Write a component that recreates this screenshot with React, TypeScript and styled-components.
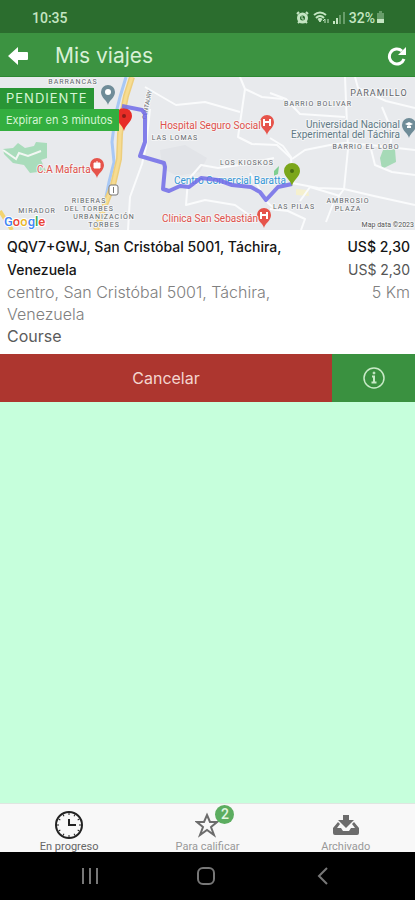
import React from "react";
import styled, { createGlobalStyle } from "styled-components";

const GlobalStyle = createGlobalStyle`
  * { box-sizing: border-box; }
  body { margin: 0; background: #c6ffdc; font-family: Inter, "Open Sans", sans-serif; }
  button { font: inherit; border: 0; padding: 0; cursor: pointer; background: none; }
  svg { display: block; }
`;

const Screen = styled.div`
  min-height: 100vh;
  display: flex;
  flex-direction: column;
  background: #c6ffdc;
`;

const StatusBar = styled.div`
  height: 33px;
  padding: 2px 30px 0 32px;
  display: flex;
  align-items: center;
  justify-content: space-between;
  background: #2b6d2e;
  color: #c4e5c2;
  font: 500 14px/20px Roboto, sans-serif;
`;

const StatusIcons = styled.div`
  display: flex;
  align-items: center;
  gap: 4px;
`;

const BatteryGroup = styled.div`
  display: flex;
  align-items: center;
  gap: 1px;
`;

const Header = styled.header`
  height: 44px;
  padding: 2px 8px 0;
  display: flex;
  align-items: center;
  background: #3c9341;
  border-bottom: 1px solid #2d8832;
  color: #fff;
`;

const Title = styled.h1`
  flex: 1;
  margin: 0 0 0 26px;
  font-size: 21px;
  line-height: 26px;
  font-weight: 400;
  color: #d9f0d7;
`;

const IconButton = styled.button`
  display: flex;
  color: inherit;
`;

const MapArea = styled.section`
  position: relative;
  height: 153px;
  overflow: hidden;
  background: #e8eaed;
`;

const MapDrawing = styled.svg`
  width: 100%;
  height: 100%;
`;

const MapText = styled.text<{ $size?: number; $spaced?: boolean }>`
  font-family: Roboto, sans-serif;
  font-size: ${(p) => p.$size ?? 8}px;
  font-weight: 400;
  letter-spacing: ${(p) => (p.$spaced ? "1px" : "normal")};
  paint-order: stroke;
  stroke: #f4f5f6;
  stroke-width: 2px;
  stroke-linejoin: round;
`;

const Badges = styled.div`
  position: absolute;
  top: 11px;
  left: 0;
  display: flex;
  flex-direction: column;
  align-items: flex-start;
`;

const Badge = styled.span<{ $strong?: boolean }>`
  padding: 0 6px;
  background: ${(p) => (p.$strong ? "#299535" : "#33ae3f")};
  color: #d6f5d4;
  font-size: ${(p) => (p.$strong ? 13 : 11)}px;
  line-height: ${(p) => (p.$strong ? 21 : 22)}px;
  letter-spacing: ${(p) => (p.$strong ? "1px" : "normal")};
`;

const Details = styled.section`
  padding: 5px 5px 6px 7px;
  display: flex;
  justify-content: space-between;
  gap: 24px;
  background: #fff;
`;

const Column = styled.div<{ $end?: boolean }>`
  flex: ${(p) => (p.$end ? "none" : "0 1 290px")};
  text-align: ${(p) => (p.$end ? "right" : "left")};
`;

const Line = styled.p<{ $tone: "strong" | "medium" | "light" | "plain" }>`
  margin: 0;
  font-size: ${(p) => (p.$tone === "light" || p.$tone === "plain" ? 16 : 14)}px;
  line-height: ${(p) => (p.$tone === "light" ? 22 : 23)}px;
  font-weight: ${(p) => (p.$tone === "strong" ? 500 : p.$tone === "light" ? 300 : 400)};
  color: ${(p) =>
    ({ strong: "#151515", medium: "#555", light: "#808080", plain: "#5b5b5b" })[p.$tone]};
`;

const Actions = styled.div`
  display: flex;
  height: 48px;
`;

const CancelButton = styled.button`
  flex: 4;
  background: #ad362f;
  color: #f4d5cf;
  font-size: 16px;
`;

const InfoButton = styled.button`
  flex: 1;
  display: flex;
  align-items: center;
  justify-content: center;
  background: #3a9140;
  color: #c8eac7;
`;

const Spacer = styled.main`
  flex: 1;
`;

const TabBar = styled.nav`
  height: 49px;
  display: grid;
  grid-template-columns: repeat(3, 1fr);
  background: #f8f8f8;
  border-top: 1px solid #dfe6e1;
  overflow: hidden;
`;

const Tab = styled.button<{ $active?: boolean }>`
  display: flex;
  flex-direction: column;
  align-items: center;
  padding-top: 5px;
  color: ${(p) => (p.$active ? "#222" : "#6c6c6c")};
`;

const TabIcon = styled.span`
  position: relative;
  height: 31px;
  display: flex;
  align-items: center;
`;

const TabLabel = styled.span<{ $active?: boolean }>`
  font: 400 11px/13px Roboto, sans-serif;
  color: ${(p) => (p.$active ? "#666" : "#999")};
`;

const Count = styled.span`
  position: absolute;
  top: -4px;
  left: 20px;
  width: 19px;
  height: 19px;
  border-radius: 50%;
  background: #5cad60;
  color: #e3f6e1;
  font: 500 14px/19px Roboto, sans-serif;
  text-align: center;
`;

const SystemBar = styled.nav`
  height: 48px;
  padding: 0 34px 0 32px;
  display: grid;
  grid-template-columns: repeat(3, 1fr);
  place-items: center;
  background: #000;
  color: #777;
`;

const roads = [
  "M150 32 L146 70 L142 87 L130 120 L128 153",
  "M240 0 L245 12 L262 20 L283 22",
  "M245 12 L238 60 L252 67 L277 68 L292 82",
  "M270 16 L286 22 L300 37 L345 40",
  "M292 82 L305 73 L330 68 L345 66 L370 68 L415 73",
  "M345 0 L348 72 L344 112 L333 127 L326 145",
  "M292 106 L318 111 L344 112",
  "M355 0 L358 11 L386 24 L415 31",
  "M270 61 L283 69 L291 80 L292 100",
  "M188 103 L201 88 L218 91 L240 88 L274 81",
  "M188 103 L186 128 L205 123 L235 128 L256 143",
  "M270 132 L288 134 L305 142 L301 153",
  "M250 96 L268 126 L276 133",
  "M344 112 L374 119 L415 128",
  "M370 68 L375 88 L392 95 L415 98",
  "M145 10 L176 28 L205 25 L240 35",
  "M382 30 L392 54 L390 72",
  "M300 124 L310 110 L340 119",
];

const areaLabels: [number, number, string][] = [
  [73, 7, "BARRANCAS"],
  [175, 63, "LAS LOMAS"],
  [247, 88, "LOS KIOSKOS"],
  [318, 29, "BARRIO BOLIVAR"],
  [366, 72, "BARRIO EL LOBO"],
  [89, 126, "RIBERAS"],
  [89, 134, "DEL TORBES"],
  [37, 136, "MIRADOR"],
  [104, 142, "URBANIZACIÓN"],
  [104, 150, "TORBES"],
  [294, 132, "LAS PILAS"],
  [348, 126, "AMBROSIO"],
  [348, 134, "PLAZA"],
];

function Pin({ x, y, color, mark, large }: { x: number; y: number; color: string; mark?: React.ReactNode; large?: boolean }) {
  return (
    <g transform={`translate(${x} ${y})`}>
      <path
        d={
          large
            ? "M0 10C-1 4-8 1-8-5A8 8 0 0 1 8-5C8 1 1 4 0 10Z"
            : "M0 11C-1 6-7 4-7-2A7 7 0 0 1 7-2C7 4 1 6 0 11Z"
        }
        fill={color}
      />
      {mark}
    </g>
  );
}

const hospitalMark = <path d="M-3-5V2M3-5V2M-3-2H3" stroke="#fff" strokeWidth="2" fill="none" />;

function TripMap() {
  return (
    <MapDrawing viewBox="0 0 415 153" preserveAspectRatio="xMidYMid slice" role="img" aria-label="Mapa del viaje">
      <rect width="415" height="153" fill="#e8eaed" />
      <path d="M160 73l25-5 22 13-7 14-23 4-15-8Z" fill="#e2e4e8" />
      <path d="M3 72l10-1 5-5 7 5 9-2 2-4 11 1v15l-6 2 5 11-16 2-6-8-11-2-9-9Z" fill="#a9dcbb" />
      <path d="M3 73l13 9 3-6 9 3 13-5" fill="none" stroke="#f2f7f3" strokeWidth="2" />
      <path d="M383 73l12-1 1 13-14 7-2-11Z" fill="#a6dab7" />
      <path d="M274 94l5-5-1 8-4 2Z" fill="#7fcf91" />
      <path d="M296 112l12 1 1 6-13-1Z" fill="#f5f0ce" />
      <g fill="none" stroke="#fafbfc" strokeWidth="2" strokeLinejoin="round">
        {roads.map((d) => (
          <path key={d} d={d} />
        ))}
      </g>
      <path d="M126 0l-6 20-5 20-3 25 2 20-5 20-4 20-8 28" fill="none" stroke="#a8c8f5" strokeWidth="3" />
      <path d="M132 0l-6 19-3 15-3 23-1 25-6 26-10 25-7 20" fill="none" stroke="#edce7d" strokeWidth="6" />
      <path d="M132 0l-6 19-3 15-3 23-1 25-6 26-10 25-7 20" fill="none" stroke="#f6dc92" strokeWidth="3" />
      <path d="M0 134l12 19" stroke="#f3d46f" strokeWidth="4" />
      <rect x="109" y="108" width="9" height="10" rx="2" fill="#fff" stroke="#777" />
      <path d="M113.500 110v6" stroke="#777" />
      <g fill="#62666b" textAnchor="middle">
        {areaLabels.map(([x, y, label]) => (
          <MapText key={label} x={x} y={y} $size={7} $spaced>
            {label}
          </MapText>
        ))}
        <MapText x="379" y="19" $size={9} $spaced>PARAMILLO</MapText>
        <MapText $size={6} transform="translate(149 28) rotate(-78)">CENTAURY</MapText>
      </g>
      <Pin x={108} y={17} color="#6f8c98" mark={<circle cy="-2" r="3" fill="#fff" />} />
      <Pin x={409} y={50} color="#6f8c98" mark={<path d="M-4-3 0-5 4-3 0-1ZM-2-1V1H2V-1" fill="#fff" />} />
      <Pin x={97} y={90} color="#e6544b" mark={<path d="M-3-4H3V1H-3ZM-1-5H1" fill="#fff" stroke="#fff" />} />
      <Pin x={267} y={47} color="#e6544b" mark={hospitalMark} />
      <Pin x={264} y={140} color="#e6544b" mark={hospitalMark} />
      <g fill="#df514b">
        <MapText x="37" y="96" $size={10}>C.A Mafarta</MapText>
        <MapText x="160" y="52" $size={10}>Hospital Seguro Social</MapText>
        <MapText x="162" y="145" $size={10}>Clínica San Sebastián</MapText>
      </g>
      <g fill="#607985" textAnchor="end">
        <MapText x="400" y="51" $size={10}>Universidad Nacional</MapText>
        <MapText x="400" y="61" $size={10}>Experimental del Táchira</MapText>
      </g>
      <g fill="#3497d6">
        <MapText x="174" y="107" $size={10}>Centro Comercial Baratta</MapText>
      </g>
      <Pin large x={124} y={44} color="#e72d26" mark={<circle cy="-5" r="2" fill="#8d1c18" />} />
      <path
        d="M122 29l20 4 3 4v28l-5 14 24 7 1 4-2 22 6 2 11-5 9 1 12-9 17 2 14 5 19 2 9 5 6 8 12-13 14-3"
        fill="none"
        stroke="#706be8"
        strokeOpacity="0.85"
        strokeWidth="4"
        strokeLinejoin="round"
      />
      <Pin large x={292} y={99} color="#7ba61a" mark={<circle cy="-5" r="2" fill="#486d10" />} />
      <g fontFamily="Roboto, sans-serif" fontSize="13" fontWeight="500" stroke="#fff" strokeWidth="2" paintOrder="stroke">
        <text x="4" y="149">
          <tspan fill="#4285f4">G</tspan>
          <tspan fill="#ea4335">o</tspan>
          <tspan fill="#e9b51f">o</tspan>
          <tspan fill="#4285f4">g</tspan>
          <tspan fill="#34a853">l</tspan>
          <tspan fill="#ea4335">e</tspan>
        </text>
      </g>
      <g fill="#555" textAnchor="end">
        <MapText x="414" y="150" $size={7}>Map data ©2023</MapText>
      </g>
    </MapDrawing>
  );
}

function ClockIcon() {
  return (
    <svg width="30" height="30" viewBox="0 0 30 30" fill="none" stroke="currentColor">
      <circle cx="15" cy="15" r="13" strokeWidth="2" />
      <path d="M15 9v6h7" strokeWidth="2" />
      {Array.from({ length: 12 }, (_, i) => (
        <path key={i} d="M15 3v2" transform={`rotate(${i * 30} 15 15)`} strokeWidth="1" />
      ))}
    </svg>
  );
}

export default function App() {
  return (
    <>
      <GlobalStyle />
      <Screen>
        <StatusBar>
          <span>10:35</span>
          <StatusIcons>
            <svg width="13" height="13" viewBox="0 0 13 13" fill="none" stroke="currentColor">
              <circle cx="6.500" cy="7" r="4" strokeWidth="3" />
              <path d="M1 3l2-2M12 3l-2-2M2 12l2-2M11 12l-2-2" strokeWidth="2" />
              <path d="M6 5v3h2" />
            </svg>
            <svg width="16" height="13" viewBox="0 0 16 13" fill="none" stroke="currentColor">
              <path d="M1 4Q7-1 13 4M3 7Q7 3 11 7" strokeWidth="2" />
              <path d="M5 8l2 3 2-3Q7 7 5 8Z" fill="currentColor" />
              <path d="M12 12V8m-2 2 2-2M15 8v4" />
            </svg>
            <svg width="12" height="12" viewBox="0 0 12 12" fill="currentColor">
              <path d="M0 9h2v3H0ZM3 6h2v6H3Z" />
              <path d="M6 3h2v9H6ZM10 0h2v12h-2Z" opacity="0.4" />
            </svg>
            <BatteryGroup>
              <span>32%</span>
              <svg width="9" height="13" viewBox="0 0 9 13" fill="currentColor">
                <path d="M3 0h3v2h2v7H1V2h2Z" opacity="0.4" />
                <path d="M1 8h7v4H1Z" />
              </svg>
            </BatteryGroup>
          </StatusIcons>
        </StatusBar>
        <Header>
          <IconButton aria-label="Volver">
            <svg width="21" height="20" viewBox="0 0 21 20" fill="currentColor">
              <path d="M0 10 10 1v5h9q1 0 1 1v6q0 1-1 1h-9v5Z" />
            </svg>
          </IconButton>
          <Title>Mis viajes</Title>
          <IconButton aria-label="Actualizar">
            <svg width="20" height="20" viewBox="0 0 20 20" fill="none" stroke="currentColor" strokeWidth="3">
              <path d="M15 5A7.500 7.500 0 1 0 17 13" />
              <path d="M19 1v8h-8Z" fill="currentColor" stroke="none" />
            </svg>
          </IconButton>
        </Header>
        <MapArea>
          <TripMap />
          <Badges>
            <Badge $strong>PENDIENTE</Badge>
            <Badge>Expirar en 3 minutos</Badge>
          </Badges>
        </MapArea>
        <Details>
          <Column>
            <Line $tone="strong">QQV7+GWJ, San Cristóbal 5001, Táchira, Venezuela</Line>
            <Line $tone="light">centro, San Cristóbal 5001, Táchira, Venezuela</Line>
            <Line $tone="plain">Course</Line>
          </Column>
          <Column $end>
            <Line $tone="strong">US$ 2,30</Line>
            <Line $tone="medium">US$ 2,30</Line>
            <Line $tone="light">5 Km</Line>
          </Column>
        </Details>
        <Actions>
          <CancelButton>Cancelar</CancelButton>
          <InfoButton aria-label="Información">
            <svg width="24" height="24" viewBox="0 0 24 24" fill="none" stroke="currentColor">
              <circle cx="12" cy="12" r="10" strokeWidth="1.500" />
              <path d="M10 10.500h2v6M9.500 16.500h5" strokeWidth="2" />
              <circle cx="12" cy="7" r="1" fill="currentColor" />
            </svg>
          </InfoButton>
        </Actions>
        <Spacer />
        <TabBar>
          <Tab $active>
            <TabIcon><ClockIcon /></TabIcon>
            <TabLabel $active>En progreso</TabLabel>
          </Tab>
          <Tab>
            <TabIcon>
              <svg width="24" height="26" viewBox="0 0 24 26" fill="none" stroke="currentColor" strokeWidth="2">
                <path d="M12 3l3 7h7l-6 5 3 8-7-5-7 5 3-8-6-5h7Z" />
              </svg>
              <Count>2</Count>
            </TabIcon>
            <TabLabel>Para calificar</TabLabel>
          </Tab>
          <Tab>
            <TabIcon>
              <svg width="28" height="22" viewBox="0 0 28 22" fill="currentColor">
                <path d="M11 1h6v5h5l-8 8-8-8h5Z" />
                <path d="M6 8 1 14v5q0 2 2 2h22q2 0 2-2v-5l-5-6-2 2 3 4h-4l-2 3H11l-2-3H5l3-4Z" />
              </svg>
            </TabIcon>
            <TabLabel>Archivado</TabLabel>
          </Tab>
        </TabBar>
        <SystemBar>
          <IconButton aria-label="Recientes">
            <svg width="18" height="18" viewBox="0 0 18 18" stroke="currentColor" strokeWidth="2">
              <path d="M2 1v16M9 1v16M16 1v16" />
            </svg>
          </IconButton>
          <IconButton aria-label="Inicio">
            <svg width="20" height="20" viewBox="0 0 20 20" fill="none" stroke="currentColor" strokeWidth="2">
              <rect x="2" y="2" width="16" height="16" rx="5" />
            </svg>
          </IconButton>
          <IconButton aria-label="Atrás">
            <svg width="12" height="18" viewBox="0 0 12 18" fill="none" stroke="currentColor" strokeWidth="2">
              <path d="M10 1 2 9l8 8" />
            </svg>
          </IconButton>
        </SystemBar>
      </Screen>
    </>
  );
}
